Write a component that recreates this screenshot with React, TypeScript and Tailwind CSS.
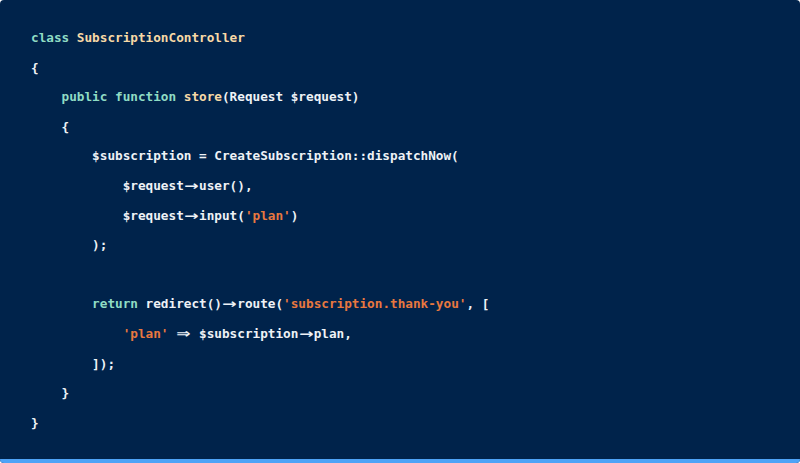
const kw = 'text-[#8fdcc4]';
const id = 'text-[#f7d9a6]';
const str = 'text-[#e8783f]';

type Tok = [string, string?];

// ligature-like arrows: each takes the width of the two characters it stands for
function Lig({ ch }: { ch: string }) {
  return (
    <span className="inline-block w-[2ch] text-center">
      <span className="inline-block scale-x-[1.35] font-['DejaVu_Sans',sans-serif]">{ch}</span>
    </span>
  );
}

function render(text: string) {
  const parts = text.split(/(→|⇒)/);
  return parts.map((p, i) => (p === '→' || p === '⇒' ? <Lig key={i} ch={p} /> : p));
}

const lines: { indent: number; toks: Tok[] }[] = [
  { indent: 0, toks: [['class', kw], [' '], ['SubscriptionController', id]] },
  { indent: 0, toks: [['{']] },
  { indent: 1, toks: [['public function', kw], [' '], ['store', id], ['(Request $request)']] },
  { indent: 1, toks: [['{']] },
  { indent: 2, toks: [['$subscription = CreateSubscription::dispatchNow(']] },
  { indent: 3, toks: [['$request→user(),']] },
  { indent: 3, toks: [['$request→input('], ["'plan'", str], [')']] },
  { indent: 2, toks: [[');']] },
  { indent: 0, toks: [] },
  { indent: 2, toks: [['return', kw], [' redirect()→route('], ["'subscription.thank-you'", str], [', [']] },
  { indent: 3, toks: [["'plan'", str], [' ⇒ $subscription→plan,']] },
  { indent: 2, toks: [[']);']] },
  { indent: 1, toks: [['}']] },
  { indent: 0, toks: [['}']] },
];

export default function App() {
  return (
    <div className="h-[463px] w-[800px] bg-white">
      <div className="flex h-full flex-col overflow-hidden rounded-[4px] bg-[#00234b]">
        <pre className="flex-1 px-[31px] pt-[23px] font-['DejaVu_Sans_Mono',monospace] text-[12.7px] font-bold leading-[29.6px] text-[#eef2f6]">
          {lines.map((line, i) => (
            <div key={i} className="h-[29.6px] whitespace-pre">
              {'    '.repeat(line.indent)}
              {line.toks.map(([text, cls], j) => (
                <span key={j} className={cls}>
                  {render(text)}
                </span>
              ))}
            </div>
          ))}
        </pre>
        <div className="h-[4px] bg-[#4ea3f7]" />
      </div>
    </div>
  );
}
